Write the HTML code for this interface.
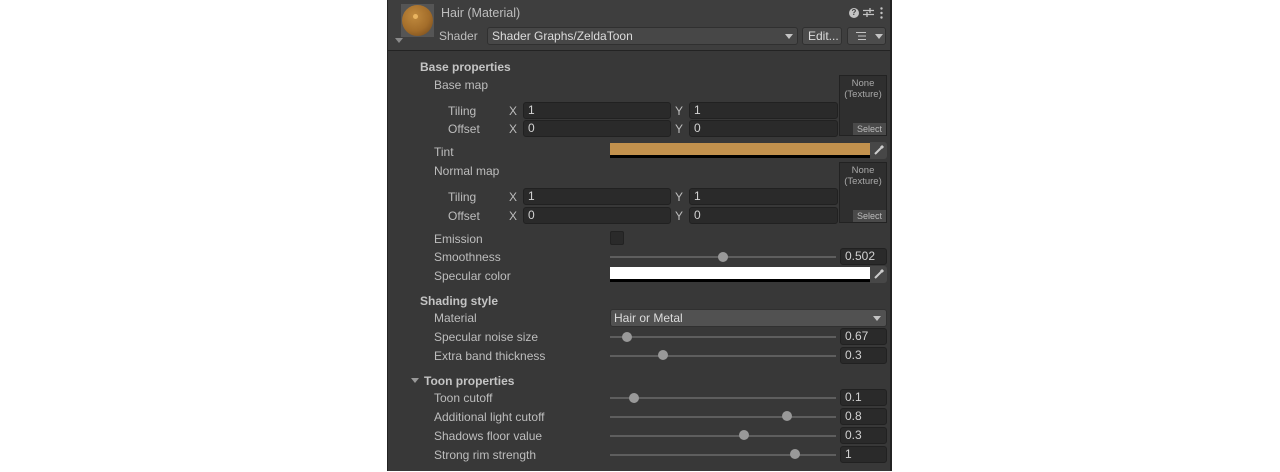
<!DOCTYPE html>
<html><head><meta charset="utf-8"><style>
*{margin:0;padding:0;box-sizing:border-box}
body{width:1280px;height:471px;background:#fff;position:relative;overflow:hidden;font-family:"Liberation Sans",sans-serif;font-size:12px;color:#bdbdbd}
#p{position:absolute;left:387px;top:0;width:505px;height:471px;background:#383838;border-left:1px solid #232323;border-right:2px solid #232323}
#c{position:absolute;left:-1px;top:1px;width:100%;height:100%}
#h{position:absolute;left:0;top:0;width:100%;height:51px;background:#3e3e3e;border-bottom:1px solid #232323}
.a{position:absolute;white-space:nowrap}
.l{position:absolute;line-height:14px;white-space:nowrap}
.b{font-weight:bold;color:#c4c4c4}
.f{position:absolute;height:17px;background:#2a2a2a;border:1px solid #212121;border-radius:3px;color:#d2d2d2;padding-left:4px;line-height:15px}
.tr{position:absolute;height:2px;background:#5e5e5e;left:222px;width:226px}
.k{position:absolute;width:10px;height:10px;border-radius:50%;background:#999}
.tex{position:absolute;left:452px;width:48px;height:61px;background:#2f2f2f;border:1px solid #222;text-align:center;font-size:9.5px;color:#a8a8a8;line-height:11px;padding-top:2px}
.sel{position:absolute;right:0;bottom:0;width:33px;height:12px;background:#4a4a4a;font-size:9px;line-height:12px;color:#bbb}
.dd{position:absolute;height:18px;background:#515151;border:1px solid #303030;border-radius:3px;color:#dcdcdc;padding-left:4px;line-height:16px}
.arr{position:absolute;width:0;height:0;border-left:4px solid transparent;border-right:4px solid transparent;border-top:5px solid #c4c4c4}
.cp{position:absolute;left:483px;width:17px;height:17px;background:#474747;border-radius:0 3px 3px 0}
</style></head><body>
<div id="p">
<div id="h">
 <div class="a" style="left:13px;top:4px;width:33px;height:33px;background:#555"></div>
 <div class="a" style="left:14px;top:5px;width:31px;height:31px;border-radius:50%;background:radial-gradient(circle at 40% 35%,#c08a3e 0,#a36d2a 55%,#6b441a 100%)"></div>
 <div class="a" style="left:25px;top:14px;width:5px;height:5px;border-radius:50%;background:#e9b460"></div>
 <div class="arr" style="left:7px;top:38px;border-top-color:#8a8a8a"></div>
 <div class="l" style="left:53px;top:6px;font-size:12.5px;color:#bdbdbd">Hair (Material)</div>
 <div class="l" style="left:51px;top:29px;color:#bdbdbd">Shader</div>
 <div class="dd" style="left:99px;top:27px;width:311px;background:#474747">Shader Graphs/ZeldaToon</div>
 <div class="arr" style="left:397px;top:34px"></div>
 <div class="dd" style="left:414px;top:27px;width:40px;background:#4c4c4c;padding-left:5px">Edit...</div>
 <div class="dd" style="left:459px;top:27px;width:39px;background:#4c4c4c"></div>
 <svg class="a" style="left:467px;top:31px" width="12" height="10"><path d="M1 1.5h10M3 5h8M3 8.5h8" stroke="#c4c4c4" stroke-width="1"/></svg>
 <div class="arr" style="left:487px;top:34px"></div>
 <div class="a" style="left:461px;top:8px;width:10px;height:10px;border-radius:50%;background:#c4c4c4;color:#3e3e3e;font-size:8px;font-weight:bold;line-height:10px;text-align:center">?</div>
 <svg class="a" style="left:475px;top:7px" width="11" height="11"><path d="M0 3.5h11M0 7.5h11M7 1v5M4 5v5" stroke="#c4c4c4" stroke-width="1.3"/></svg>
 <svg class="a" style="left:492px;top:7px" width="3" height="12"><circle cx="1.5" cy="1.5" r="1.2" fill="#c4c4c4"/><circle cx="1.5" cy="6" r="1.2" fill="#c4c4c4"/><circle cx="1.5" cy="10.5" r="1.2" fill="#c4c4c4"/></svg>
</div>
<div id="c">
<div class="l b" style="left:33px;top:59px">Base properties</div>
<div class="l" style="left:47px;top:77px">Base map</div>
<div class="l" style="left:61px;top:103px">Tiling</div><div class="l" style="left:122px;top:103px">X</div><div class="f" style="left:136px;top:101px;width:148px">1</div><div class="l" style="left:288px;top:103px">Y</div><div class="f" style="left:302px;top:101px;width:149px">1</div>
<div class="l" style="left:61px;top:121px">Offset</div><div class="l" style="left:122px;top:121px">X</div><div class="f" style="left:136px;top:119px;width:148px">0</div><div class="l" style="left:288px;top:121px">Y</div><div class="f" style="left:302px;top:119px;width:149px">0</div>
<div class="tex" style="top:74px">None<br>(Texture)<div class="sel">Select</div></div>
<div class="l" style="left:47px;top:144px">Tint</div>
<div class="a" style="left:223px;top:142px;width:260px;height:15px;background:#c2914d;border-bottom:3px solid #000"></div><div class="cp" style="top:141px"></div>
<svg class="a" style="left:486px;top:143px" width="12" height="12"><path d="M2 10L8 4" stroke="#ccc" stroke-width="2"/><path d="M8 2l2 2" stroke="#ccc" stroke-width="3"/></svg>
<div class="l" style="left:47px;top:163px">Normal map</div>
<div class="l" style="left:61px;top:189px">Tiling</div><div class="l" style="left:122px;top:189px">X</div><div class="f" style="left:136px;top:187px;width:148px">1</div><div class="l" style="left:288px;top:189px">Y</div><div class="f" style="left:302px;top:187px;width:149px">1</div>
<div class="l" style="left:61px;top:208px">Offset</div><div class="l" style="left:122px;top:208px">X</div><div class="f" style="left:136px;top:206px;width:148px">0</div><div class="l" style="left:288px;top:208px">Y</div><div class="f" style="left:302px;top:206px;width:149px">0</div>
<div class="tex" style="top:161px">None<br>(Texture)<div class="sel">Select</div></div>
<div class="l" style="left:47px;top:231px">Emission</div>
<div class="a" style="left:223px;top:230px;width:14px;height:14px;background:#2a2a2a;border:1px solid #222;border-radius:2px"></div>
<div class="l" style="left:47px;top:249px">Smoothness</div><div class="tr" style="top:255px;left:223px"></div><div class="k" style="left:331px;top:251px"></div><div class="f" style="left:453px;top:247px;width:47px">0.502</div>
<div class="l" style="left:47px;top:268px">Specular color</div>
<div class="a" style="left:223px;top:266px;width:260px;height:15px;background:#fff;border-bottom:3px solid #000"></div><div class="cp" style="top:265px"></div>
<svg class="a" style="left:486px;top:267px" width="12" height="12"><path d="M2 10L8 4" stroke="#ccc" stroke-width="2"/><path d="M8 2l2 2" stroke="#ccc" stroke-width="3"/></svg>
<div class="l b" style="left:33px;top:293px">Shading style</div>
<div class="l" style="left:47px;top:310px">Material</div>
<div class="dd" style="left:223px;top:308px;width:277px;padding-left:3px">Hair or Metal</div><div class="arr" style="left:486px;top:315px"></div>
<div class="l" style="left:47px;top:329px">Specular noise size</div><div class="tr" style="top:335px;left:223px"></div><div class="k" style="left:235px;top:331px"></div><div class="f" style="left:453px;top:327px;width:47px">0.67</div>
<div class="l" style="left:47px;top:348px">Extra band thickness</div><div class="tr" style="top:354px;left:223px"></div><div class="k" style="left:271px;top:349px"></div><div class="f" style="left:453px;top:346px;width:47px">0.3</div>
<div class="arr" style="left:24px;top:377px;border-top-color:#999"></div>
<div class="l b" style="left:37px;top:373px">Toon properties</div>
<div class="l" style="left:47px;top:390px">Toon cutoff</div><div class="tr" style="top:396px;left:223px"></div><div class="k" style="left:242px;top:392px"></div><div class="f" style="left:453px;top:388px;width:47px">0.1</div>
<div class="l" style="left:47px;top:409px">Additional light cutoff</div><div class="tr" style="top:415px;left:223px"></div><div class="k" style="left:395px;top:410px"></div><div class="f" style="left:453px;top:407px;width:47px">0.8</div>
<div class="l" style="left:47px;top:428px">Shadows floor value</div><div class="tr" style="top:434px;left:223px"></div><div class="k" style="left:352px;top:429px"></div><div class="f" style="left:453px;top:426px;width:47px">0.3</div>
<div class="l" style="left:47px;top:447px">Strong rim strength</div><div class="tr" style="top:453px;left:223px"></div><div class="k" style="left:403px;top:448px"></div><div class="f" style="left:453px;top:445px;width:47px">1</div>
</div>
</div>
</body></html>
